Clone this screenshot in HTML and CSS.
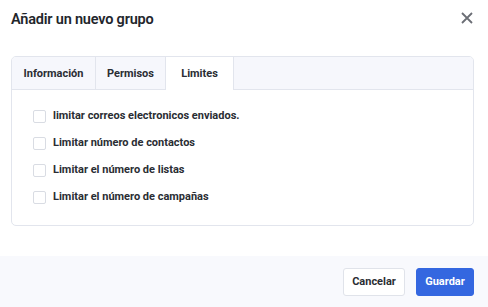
FILE: index.html
```html
<!DOCTYPE html>
<html lang="es">
<head>
    <meta charset="UTF-8">
    <meta name="viewport" content="width=device-width, initial-scale=1.0">
    <title>Añadir un nuevo grupo</title>
    <link rel="stylesheet" href="styles.css">
</head>
<body>
    <div class="modal">
        <div class="modal-header">
            <h2 class="modal-title">Añadir un nuevo grupo</h2>
            <button class="close" aria-label="Cerrar">
                <svg width="12" height="12" viewBox="0 0 12 12"><path d="M1 1L11 11M11 1L1 11" stroke="#6b6e75" stroke-width="1.8"/></svg>
            </button>
        </div>

        <div class="modal-body">
            <div class="card">
                <ul class="tabs">
                    <li class="tab">Información</li>
                    <li class="tab">Permisos</li>
                    <li class="tab active">Limites</li>
                </ul>
                <div class="tab-content">
                    <label class="check"><input type="checkbox"> <span>limitar correos electronicos enviados.</span></label>
                    <label class="check"><input type="checkbox"> <span>Limitar número de contactos</span></label>
                    <label class="check"><input type="checkbox"> <span>Limitar el número de listas</span></label>
                    <label class="check"><input type="checkbox"> <span>Limitar el número de campañas</span></label>
                </div>
            </div>
        </div>

        <div class="modal-footer">
            <button class="btn btn-light">Cancelar</button>
            <button class="btn btn-primary">Guardar</button>
        </div>
    </div>
</body>
</html>
```

FILE: styles.css
```css
body {
    margin: 0;
    font-family: 'Roboto', 'Inter', sans-serif;
    color: #2a2d33;
    background: #fff;
}
.modal {
    width: 488px;
    height: 307px;
    display: flex;
    flex-direction: column;
}
.modal-header {
    display: flex;
    justify-content: space-between;
    align-items: flex-start;
    padding: 10px 14px 0 11px;
    height: 46px;
}
.modal-title {
    margin: 0;
    font-size: 14.5px;
    font-weight: 600;
    letter-spacing: -0.2px;
    color: #22252b;
    line-height: 20px;
}
.close {
    background: none;
    border: none;
    padding: 0;
    margin-top: 2px;
    margin-right: 1px;
    cursor: pointer;
    line-height: 0;
}
.modal-body {
    padding: 0 14px 0 11px;
}
.card {
    border: 1px solid #e2e5ed;
    border-radius: 5px;
    height: 168px;
    overflow: hidden;
}
.tabs {
    list-style: none;
    margin: 0;
    padding: 0;
    display: flex;
    background: #f6f7fc;
    border-bottom: 1px solid #e2e5ed;
    height: 32px;
}
.tab {
    display: flex;
    align-items: center;
    justify-content: center;
    font-size: 11px;
    font-weight: 700;
    color: #2a2d33;
    border-right: 1px solid #e2e5ed;
}
.tab:nth-child(1) { width: 83px; }
.tab:nth-child(2) { width: 69px; }
.tab:nth-child(3) { width: 67px; }
.tab.active {
    background: #fff;
    margin-bottom: -1px;
}
.tab-content {
    padding: 19px 21px;
    display: flex;
    flex-direction: column;
    gap: 13px;
}
.check {
    display: flex;
    align-items: center;
    gap: 7px;
    font-size: 11px;
    font-weight: 700;
    line-height: 14px;
}
.check input {
    appearance: none;
    margin: 0;
    width: 13px;
    height: 13px;
    border: 1px solid #d9dce3;
    border-radius: 2px;
    background: #fff;
}
.modal-footer {
    margin-top: auto;
    height: 51px;
    background: #f8f9fd;
    display: flex;
    justify-content: flex-end;
    align-items: center;
    gap: 11px;
    padding: 0 14px;
}
.btn {
    font-family: inherit;
    font-size: 11px;
    font-weight: 700;
    height: 28px;
    border-radius: 3px;
    cursor: pointer;
}
.btn-light {
    width: 62px;
    background: #fff;
    border: 1px solid #e0e3ea;
    color: #2a2d33;
}
.btn-primary {
    width: 58px;
    background: #3467e0;
    border: 1px solid #3467e0;
    color: #fff;
}
```
